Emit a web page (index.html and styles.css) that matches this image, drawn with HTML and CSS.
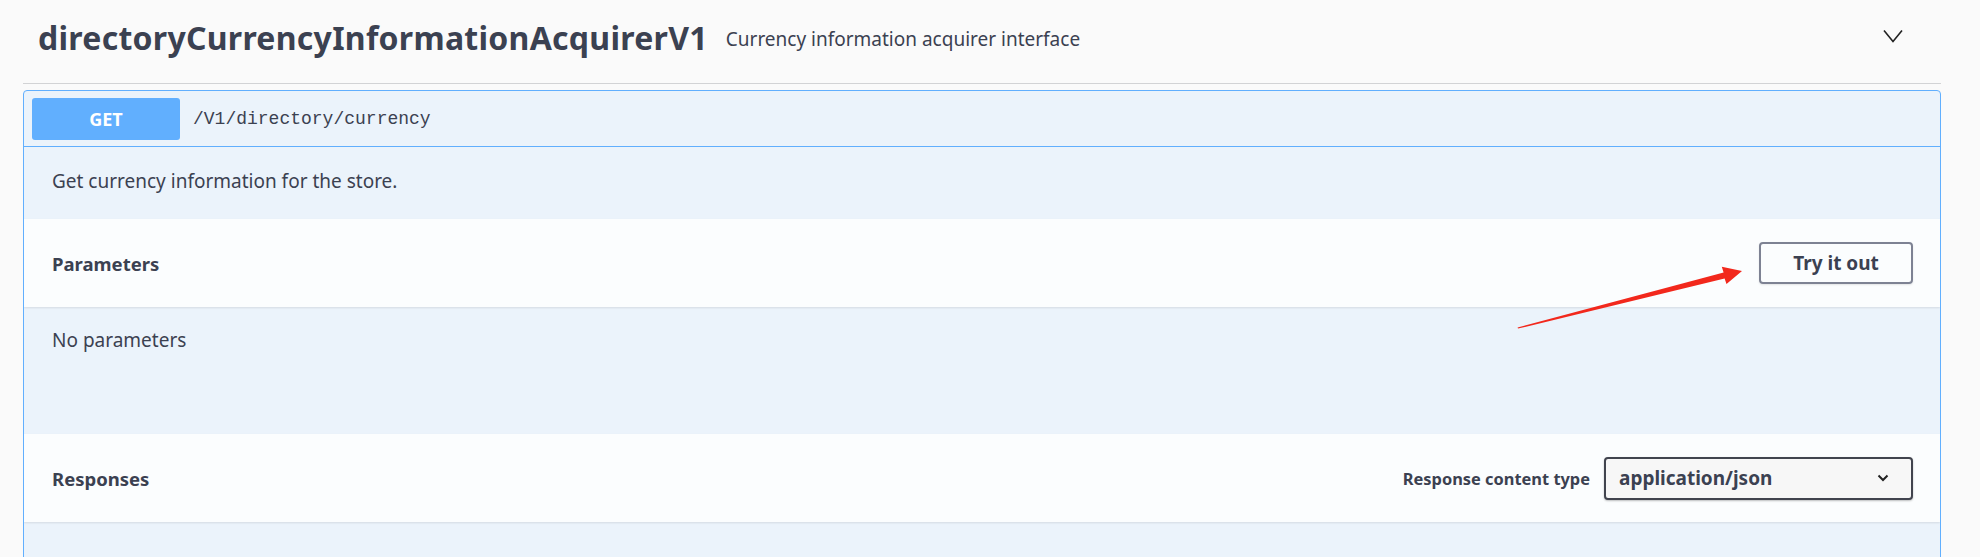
FILE: index.html
```html
<!DOCTYPE html>
<html lang="en">
<head>
<meta charset="utf-8">
<title>directoryCurrencyInformationAcquirerV1</title>
<link rel="stylesheet" href="styles.css">
</head>
<body>
<div class="wrapper">
  <div class="tag-row">
    <h3 class="tag-title">directoryCurrencyInformationAcquirerV1</h3>
    <span class="tag-desc">Currency information acquirer interface</span>
    <span class="tag-toggle">
      <svg width="20" height="14" viewBox="0 0 20 14"><polyline points="1,1.5 10,12.5 19,1.5" fill="none" stroke="#222" stroke-width="1.6"/></svg>
    </span>
  </div>

  <div class="opblock">
    <div class="summary">
      <span class="method">GET</span>
      <span class="path">/V1/directory/currency</span>
    </div>
    <div class="description">Get currency information for the store.</div>

    <div class="section-header">
      <h4 class="section-title">Parameters</h4>
      <button class="try-out">Try it out</button>
    </div>
    <div class="params-body">No parameters</div>

    <div class="section-header">
      <h4 class="section-title">Responses</h4>
      <div class="content-type">
        <span class="ct-label">Response content type</span>
        <div class="select">
          <span>application/json</span>
          <svg width="12" height="8" viewBox="0 0 12 8"><polyline points="1.5,1.5 6,6 10.5,1.5" fill="none" stroke="#222" stroke-width="2"/></svg>
        </div>
      </div>
    </div>
    <div class="resp-body"></div>
  </div>
</div>

<svg class="annot-arrow" width="1980" height="557" viewBox="0 0 1980 557">
  <polygon fill="#f2281c" points="1518,328.6 1724.6,278.6 1726.5,284 1742,271 1721.8,266.8 1723.6,272.5 1517.6,327.4"/>
</svg>
</body>
</html>
```

FILE: styles.css
```css
* { box-sizing: border-box; }
html, body { margin: 0; padding: 0; }
body {
  background: #fafafa;
  font-family: "Noto Sans", "Open Sans", sans-serif;
  color: #3b4151;
  height: 557px;
  overflow: hidden;
  position: relative;
}
.wrapper {
  margin: 0 39px 0 23px;
}
.tag-row {
  height: 84px;
  display: flex;
  align-items: center;
  padding: 0 0 0 15px;
  border-bottom: 1px solid #d2d3d5;
  margin-bottom: 6px;
}
.tag-title {
  margin: -9px 0 0 0;
  font-size: 32px;
  font-weight: 700;
  letter-spacing: 0.27px;
  color: #3b4151;
}
.tag-desc {
  font-size: 19px;
  margin: -6px 0 0 18px;
  flex: 1;
}
.tag-toggle {
  display: flex;
  margin: -12px 38px 0 0;
}
.opblock {
  border: 1px solid #61affe;
  border-radius: 4px;
  background: #ebf3fb;
  overflow: hidden;
}
.summary {
  display: flex;
  align-items: center;
  padding: 7px 8px 6px 8px;
  border-bottom: 1px solid #61affe;
}
.method {
  width: 148px;
  height: 42px;
  background: #61affe;
  border-radius: 3px;
  color: #fff;
  font-weight: 700;
  font-size: 18px;
  display: flex;
  align-items: center;
  justify-content: center;
}
.path {
  margin-left: 13px;
  font-family: "Liberation Mono", "DejaVu Sans Mono", monospace;
  font-size: 18px;
  color: #3b4151;
}
.description {
  height: 72px;
  padding: 0 28px 4px;
  display: flex;
  align-items: center;
  font-size: 19px;
}
.section-header {
  height: 88px;
  background: #fbfdfe;
  box-shadow: 0 1px 2px rgba(0,0,0,0.1);
  display: flex;
  align-items: center;
  justify-content: space-between;
  padding: 0 27px 0 28px;
}
.section-title {
  margin: 0;
  font-size: 18.5px;
  font-weight: 700;
}
.try-out {
  width: 154px;
  height: 42px;
  border: 2px solid #7d8293;
  border-radius: 4px;
  background: transparent;
  font-family: inherit;
  font-size: 19px;
  font-weight: 700;
  color: #3b4151;
  box-shadow: 0 1px 2px rgba(0,0,0,0.1);
  margin-top: 0;
}
.params-body {
  height: 127px;
  padding: 20px 28px 0;
  font-size: 19px;
}
.content-type {
  display: flex;
  align-items: center;
}
.ct-label {
  font-size: 16.4px;
  font-weight: 700;
  margin-right: 14px;
}
.select {
  width: 309px;
  height: 43px;
  border: 2px solid #41444e;
  border-radius: 4px;
  background: #f7f7f7;
  box-shadow: 0 1px 2px rgba(0,0,0,0.25);
  display: flex;
  align-items: center;
  justify-content: space-between;
  padding: 0 22px 0 13px;
  font-size: 19px;
  font-weight: 700;
}
.resp-body {
  height: 60px;
}
.annot-arrow {
  position: absolute;
  left: 0;
  top: 0;
  pointer-events: none;
}
```
